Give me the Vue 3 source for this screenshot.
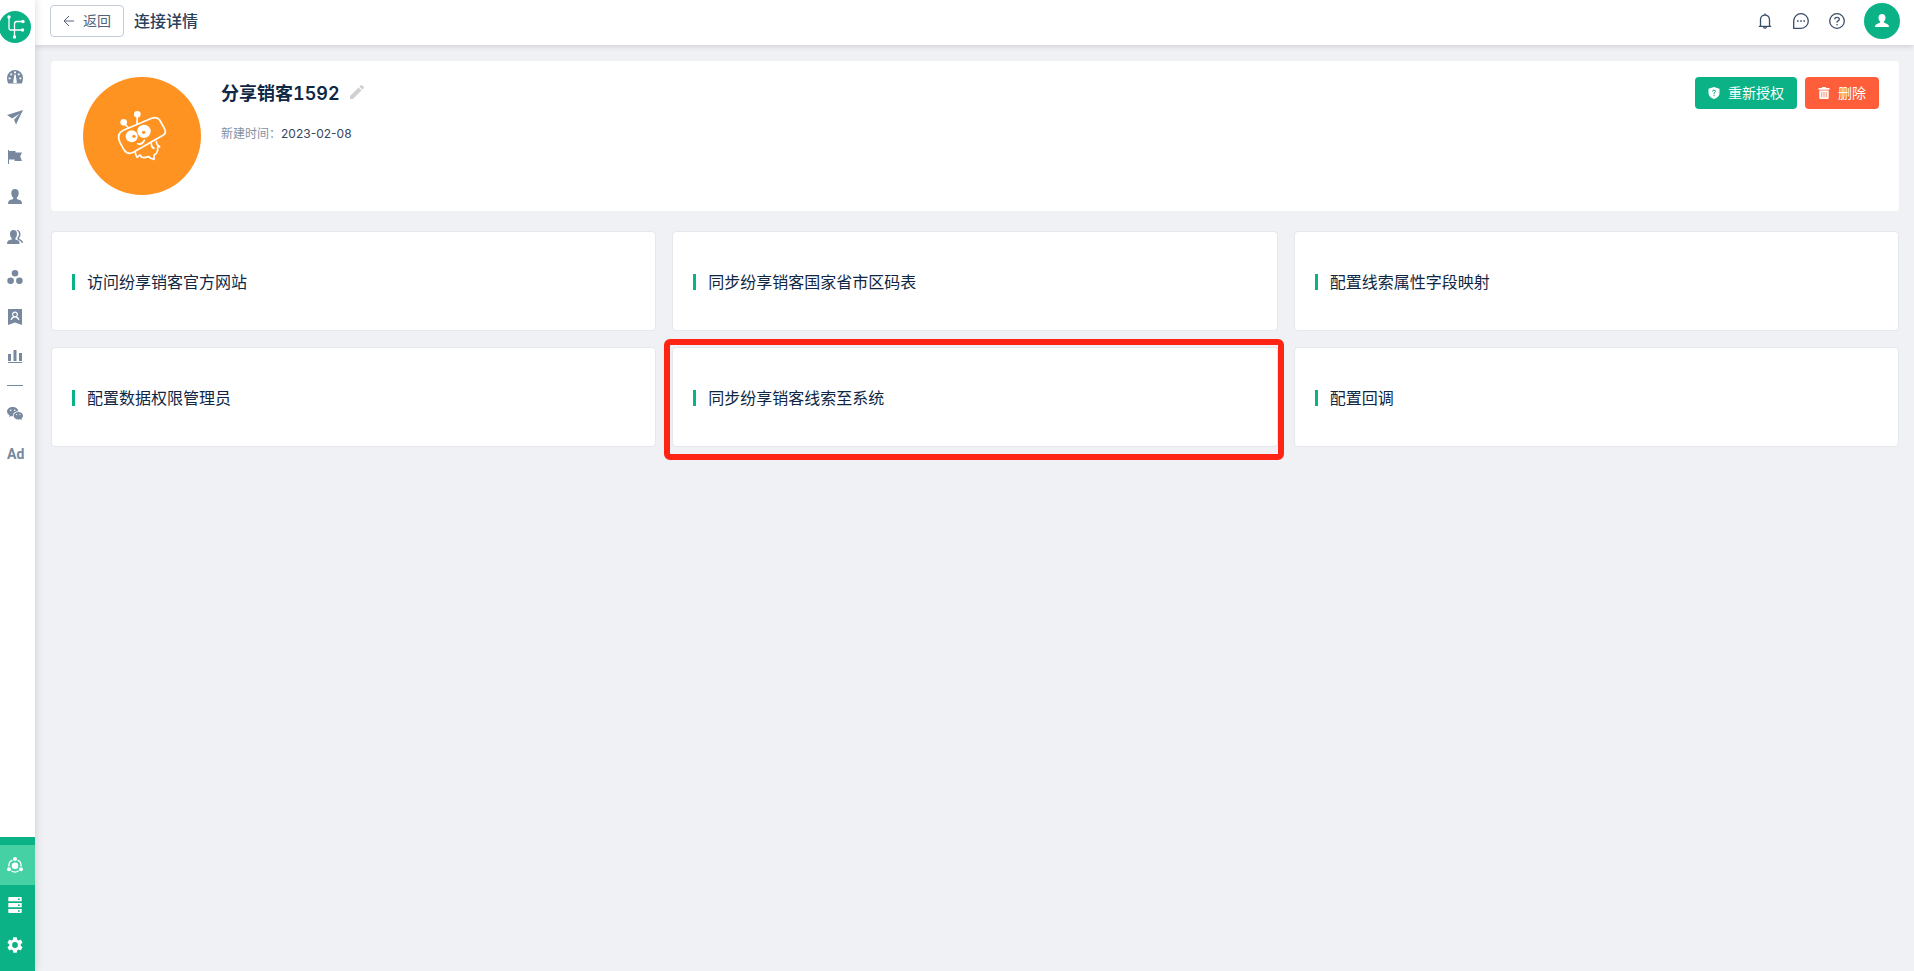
<template>
  <div class="layout">
    <aside class="sidebar">
      <a href="#" class="logo" aria-label="首页">
        <svg viewBox="0 0 32 32" width="32" height="32">
          <circle cx="16" cy="16" r="16" fill="#0ab286" />
          <g fill="none" stroke="#fff" stroke-width="1.3">
            <path d="M10 6v11q0 2 2 2h11M24 10.500h-6q-2.500 0-2.500 2.500v13" />
          </g>
          <g fill="#fff">
            <circle cx="10" cy="6" r="1.700" />
            <circle cx="24" cy="10.500" r="1.700" />
            <circle cx="23.500" cy="19" r="1.700" />
            <circle cx="15.500" cy="26" r="1.700" />
          </g>
        </svg>
      </a>
      <nav class="menu">
        <template v-for="item in menus" :key="item.name">
          <hr v-if="item.divided" class="divider" />
          <a href="#" class="menu-item" :aria-label="item.name">
            <span v-if="item.text" class="menu-text">{{ item.text }}</span>
            <svg v-else viewBox="0 0 16 16" width="16" height="16">
              <path :d="item.icon" fill="currentColor" fill-rule="evenodd" />
            </svg>
          </a>
        </template>
      </nav>
      <nav class="menu menu-bottom">
        <a href="#" class="menu-item active" aria-label="连接">
          <svg viewBox="0 0 16 16" width="16" height="16">
            <g fill="none" stroke="currentColor" stroke-width="1.300">
              <path d="M5.500 3.100A6 6 0 0 0 2 9.500M10.500 3.100A6 6 0 0 1 14 9.500M4.300 13.800a6.300 6.300 0 0 0 7.400 0" />
            </g>
            <g fill="currentColor">
              <circle cx="8" cy="8.700" r="3.300" />
              <circle cx="8" cy="2" r="2" />
              <circle cx="2" cy="12.200" r="2" />
              <circle cx="14" cy="12.200" r="2" />
            </g>
          </svg>
        </a>
        <a href="#" class="menu-item" aria-label="数据">
          <svg viewBox="0 0 16 16" width="16" height="16">
            <path
              d="M2 0h12q.700 0 .700.700v3.600H1.300V.700Q1.300 0 2 0zM1.300 6h13.400v4.300H1.300zM1.300 12h13.400v3.300q0 .700-.700.700H2q-.700 0-.700-.700zM11 1.500v1.500h1.700V1.500zM11 7.400v1.500h1.700V7.400zM11 13.300v1.500h1.700v-1.500z"
              fill="currentColor"
              fill-rule="evenodd"
            />
          </svg>
        </a>
        <a href="#" class="menu-item" aria-label="设置">
          <svg viewBox="2 2 20 20" width="16" height="16">
            <path
              d="M19.140 12.940c.040-.300.060-.610.060-.940s-.020-.640-.070-.940l2.030-1.580a.49.49 0 0 0 .120-.610l-1.920-3.320a.49.49 0 0 0-.590-.220l-2.390.960a7 7 0 0 0-1.620-.940l-.360-2.540a.48.48 0 0 0-.480-.410h-3.840a.48.48 0 0 0-.470.410l-.360 2.540a7.300 7.300 0 0 0-1.620.940l-2.390-.960a.48.48 0 0 0-.590.220L2.740 8.870a.48.48 0 0 0 .120.610l2.030 1.580a6 6 0 0 0 0 1.880l-2.030 1.580a.49.49 0 0 0-.120.610l1.920 3.320c.120.220.370.290.590.220l2.390-.960c.500.380 1.030.700 1.620.940l.360 2.540c.050.240.240.410.480.410h3.840c.240 0 .440-.170.470-.410l.360-2.540a7.300 7.300 0 0 0 1.620-.940l2.390.960c.220.080.470 0 .590-.220l1.920-3.320a.48.48 0 0 0-.120-.610zM12 15.600a3.600 3.600 0 1 1 0-7.200 3.600 3.600 0 0 1 0 7.200z"
              fill="currentColor"
            />
          </svg>
        </a>
      </nav>
    </aside>

    <div class="container">
      <header class="header">
        <button type="button" class="btn btn-back">
          <svg viewBox="0 0 12 12" width="12" height="12">
            <path d="M11 6H1.500M6 1 1 6l5 5" fill="none" stroke="currentColor" />
          </svg>
          <span class="btn-text">返回</span>
        </button>
        <h1 class="title">连接详情</h1>
        <div class="header-tools">
          <button type="button" class="tool" aria-label="通知">
            <svg viewBox="0 0 16 16" width="16" height="16">
              <path
                d="M1.800 13.300h12.400M3.500 13.300V6.500a4.500 4.500 0 0 1 9 0v6.800M8 2V.500M6.300 14.300q1.700 1.700 3.400 0"
                fill="none"
                stroke="currentColor"
                stroke-width="1.300"
              />
            </svg>
          </button>
          <button type="button" class="tool" aria-label="消息">
            <svg viewBox="0 0 16 16" width="16" height="16">
              <path
                d="M.700 15.300V8A7.300 7.300 0 1 1 8 15.300z"
                fill="none"
                stroke="currentColor"
                stroke-width="1.300"
              />
              <path d="M4 7.200h1.600v1.600H4zM7.200 7.200h1.600v1.600H7.200zM10.400 7.200H12v1.600h-1.600z" fill="currentColor" />
            </svg>
          </button>
          <button type="button" class="tool" aria-label="帮助">
            <svg viewBox="0 0 16 16" width="16" height="16">
              <g fill="none" stroke="currentColor" stroke-width="1.300">
                <circle cx="8" cy="8" r="7.300" />
                <path d="M5.700 6.300Q5.700 4.300 8 4.300t2.300 2q0 1-1.200 1.600T8 9.600" />
              </g>
              <circle cx="8" cy="11.800" r=".8" fill="currentColor" />
            </svg>
          </button>
        </div>
        <button type="button" class="user" aria-label="用户">
          <svg viewBox="0 0 14 14" width="14" height="14">
            <path :d="userIcon" fill="currentColor" />
          </svg>
        </button>
      </header>

      <main class="main">
        <section class="profile">
          <div class="avatar">
            <svg viewBox="-87 -87 354 354" width="118" height="118">
              <g fill="none" stroke="#fff" stroke-width="5" stroke-linejoin="round" stroke-linecap="round">
                <path d="M34 73 119 37Q135 31 143 42L158 69Q164 81 153 88L64 139Q47 147 37 133L23 108Q13 83 34 73z" />
                <path d="M38 54 50 66M76 30 75 54M77 113Q90 118 97 103" />
                <path
                  d="M70 140Q71 148 75 154L84 147Q89 156 96 155L111 152Q116 159 126 160L126 148Q139 140 137 124L143 122Q133 117 133 107M118 113Q118 124 126 127"
                />
              </g>
              <g fill="#fff">
                <circle cx="35" cy="49" r="10" />
                <circle cx="76" cy="25" r="10" />
                <circle cx="59" cy="91" r="18" />
                <circle cx="96" cy="76" r="20" />
              </g>
              <g fill="#ff9321">
                <circle cx="66" cy="91" r="5" />
                <circle cx="95" cy="79" r="5" />
              </g>
            </svg>
          </div>
          <div class="info">
            <h2 class="name">
              分享销客1592
              <button type="button" class="edit" aria-label="编辑">
                <svg viewBox="3 3 18 18" width="14" height="14">
                  <path
                    d="M3 17.250V21h3.750L17.810 9.940l-3.750-3.750zM20.710 7.040a1 1 0 0 0 0-1.410l-2.340-2.340a1 1 0 0 0-1.410 0l-1.830 1.830 3.750 3.750z"
                    fill="currentColor"
                  />
                </svg>
              </button>
            </h2>
            <p class="created"><span class="label">新建时间：</span>2023-02-08</p>
          </div>
          <div class="actions">
            <button type="button" class="btn btn-primary">
              <svg viewBox="0 0 12 12" width="12" height="12">
                <path d="M6 0 11.500 1.700V6Q11.500 10 6 12 .5 10 .5 6V1.700z" fill="currentColor" />
                <path d="M4.500 4.500Q4.500 3.200 6 3.200t1.500 1.200Q7.500 5.300 6 6v1.200M6 8v1.200" fill="none" stroke="#0ab286" />
              </svg>
              <span class="btn-text">重新授权</span>
            </button>
            <button type="button" class="btn btn-danger">
              <svg viewBox="0 0 12 12" width="12" height="12">
                <path d="M4 0h4v1h3.500v1.800H.5V1H4zM1.300 3.500h9.400V11q0 1-1 1H2.300q-1 0-1-1z" fill="currentColor" />
                <path d="M3.800 5v5.500M6 5v5.500M8.200 5v5.500" stroke="#ff5e3a" stroke-width=".7" />
              </svg>
              <span class="btn-text">删除</span>
            </button>
          </div>
        </section>

        <section class="card-list">
          <a
            v-for="card in cards"
            :key="card"
            href="#"
            :class="['card', card === activeCard ? 'marked' : '']"
          >
            <span class="card-title">{{ card }}</span>
          </a>
        </section>
      </main>
    </div>
  </div>
</template>

<script setup>
import { ref } from "vue";

const userIcon =
  "M7 0C9.200 0 10.500 1.500 10.500 3.800 10.500 5.500 9.800 6.800 8.900 7.600V8.600L12.500 10.200Q14 11 14 13H0Q0 11 1.500 10.200L5.100 8.600V7.600C4.200 6.800 3.500 5.500 3.500 3.800 3.500 1.500 4.800 0 7 0z";

const menus = [
  {
    name: "概览",
    icon: "M8 1a8 8 0 0 1 8 8q0 3-1.200 5.500H1.200Q0 12 0 9a8 8 0 0 1 8-8zM7.400 5.500 6.300 12v2h3.400v-2L8.600 5.500zM7 2.500v1.800h2V2.500zM3.300 4.500v1.800h1.900V4.500zM10.800 4.500v1.800h1.900V4.500zM1.700 8.500v1.800h1.900V8.500zM12.400 8.500v1.800h1.900V8.500z",
  },
  { name: "营销", icon: "M16 1 9 15.500 7 10.800 12.500 4.800 5.200 9.400 0 6z" },
  {
    name: "活动",
    icon: "M1 1h1v1h6.500v1.500H15l-1.800 4L15 12H7.500v-1.500H2V15H1z",
  },
  {
    name: "用户",
    icon: "M8 0c2.400 0 3.700 1.600 3.700 4 0 2-.8 3.700-1.800 4.600V10l3.600 1.200Q15 12 15 15H1q0-3 1.500-3.800L6.100 10V8.600C5.100 7.700 4.300 6 4.300 4 4.300 1.600 5.600 0 8 0z",
  },
  {
    name: "群组",
    icon: "M6.500 1C8.800 1 10 2.600 10 4.900c0 2-.8 3.400-1.600 4.100v1.400l3 1.200Q12.600 12.500 12.600 15H0q0-2.500 1.400-3.400l3.300-1.200V9C3.800 8.300 3 6.900 3 4.900 3 2.600 4.200 1 6.500 1zM9.500 1c2.700-.2 4 1.600 4 4 0 1.700-.6 3.200-1.400 4v.8l2.600 1.500q1.300.9 1.300 2.700h-1.400q0-1-1-1.700L10.500 10.500V8.600Q12 7.400 12 5T9.500 1z",
  },
  {
    name: "分组",
    icon: "M8 1a3.300 3.300 0 1 1 0 6.600A3.300 3.300 0 0 1 8 1zM3.600 8.400a3.300 3.300 0 1 1 0 6.600 3.300 3.300 0 0 1 0-6.600zM12.400 8.400a3.300 3.300 0 1 1 0 6.600 3.300 3.300 0 0 1 0-6.600z",
  },
  {
    name: "会员",
    icon: "M1 0h14v16l-7-2.500L1 16zM8 2.500A2.900 2.900 0 0 0 6 7.600Q4 8.600 3.500 11h1.300Q5.500 8.500 8 8.500T11.200 11h1.300Q12 8.600 10 7.600A2.900 2.900 0 0 0 8 2.500zM8 3.700a1.800 1.800 0 1 1 0 3.600 1.800 1.800 0 0 1 0-3.600z",
  },
  {
    name: "统计",
    icon: "M1 5h3v7H1zM6.500 1h3v11h-3zM12 4h3v8h-3zM1 13h14v1H1z",
  },
  {
    name: "微信",
    divided: true,
    icon: "M5.700 1C9 1 11.300 3 11.400 5.300 8 5.200 5.500 7.600 6 10.300q-1.200 0-2-.3l-2 1.100.6-1.800Q0 7.800 0 5.500C0 3 2.500 1 5.700 1zM3.700 3.400a.8.800 0 1 0 0 1.600.8.800 0 0 0 0-1.600zM7.700 3.400a.8.800 0 1 0 0 1.600.8.800 0 0 0 0-1.600zM11.300 6c2.700 0 4.700 1.700 4.700 3.800q0 1.700-1.500 2.800l.4 1.400-1.600-.8q-1 .3-2 .3c-2.700 0-4.700-1.700-4.700-3.700S8.600 6 11.300 6zM9.700 8a.6.600 0 1 0 0 1.200.6.600 0 0 0 0-1.200zM12.900 8a.6.600 0 1 0 0 1.200.6.600 0 0 0 0-1.200z",
  },
  { name: "广告", text: "Ad" },
];

const cards = [
  "访问纷享销客官方网站",
  "同步纷享销客国家省市区码表",
  "配置线索属性字段映射",
  "配置数据权限管理员",
  "同步纷享销客线索至系统",
  "配置回调",
];

const activeCard = ref("同步纷享销客线索至系统");
</script>

<style>
body {
  margin: 0;
  background: #f0f1f5;
}
</style>

<style scoped>
.layout {
  display: flex;
  min-height: 100vh;
  color: #0f2744;
  font-family: Inter, "Noto Sans CJK SC", sans-serif;
  font-size: 14px;
}
.layout * {
  box-sizing: border-box;
}
svg {
  display: block;
  flex: none;
}
button {
  padding: 0;
  border: 0;
  background: none;
  color: inherit;
  font: inherit;
  cursor: pointer;
}
a {
  color: inherit;
  text-decoration: none;
}

/* 侧边栏 */
.sidebar {
  z-index: 2;
  display: flex;
  flex: none;
  flex-direction: column;
  width: 35px;
  background: #fff;
  box-shadow: 0 0 8px rgba(30, 35, 50, 0.18);
}
.logo {
  height: 57px;
  padding-top: 11px;
  margin-left: -1px;
}
.menu {
  color: #78899f;
}
.menu-item {
  display: flex;
  align-items: center;
  height: 40px;
  padding-left: 7px;
}
.menu-text {
  font-family: Roboto, sans-serif;
  font-size: 14px;
  font-weight: 700;
}
.divider {
  width: 16px;
  margin: 8px 0 8px 7px;
  border: 0;
  border-top: 1px solid #78899f;
}
.menu-bottom {
  margin-top: auto;
  padding: 8px 0 6px;
  background: #0ab286;
  color: #fff;
}
.menu-item.active {
  background: #45d1a4;
}

/* 顶栏 */
.container {
  flex: 1;
  min-width: 0;
}
.header {
  position: relative;
  display: flex;
  align-items: center;
  height: 45px;
  padding: 0 14px 3px 15px;
  background: #fff;
  box-shadow: 0 1px 6px rgba(30, 35, 50, 0.18);
}
.btn {
  display: flex;
  align-items: center;
  gap: 8px;
  height: 32px;
  padding: 0 13px;
  border-radius: 4px;
  color: #fff;
}
.btn-text {
  padding-bottom: 2px;
}
.btn-back {
  padding: 0 12px;
  border: 1px solid #c3ccd6;
  color: #52647a;
}
.title {
  margin: 0 0 0 10px;
  padding-bottom: 2px;
  color: #2b405b;
  font-size: 16px;
  font-weight: 500;
}
.header-tools {
  display: flex;
  align-items: center;
  gap: 20px;
  margin: 0 19px 0 auto;
  color: #3b4f69;
}
.user {
  display: flex;
  align-items: center;
  justify-content: center;
  width: 36px;
  height: 36px;
  border-radius: 50%;
  background: #0ab286;
  color: #fff;
}

.main {
  padding: 16px 15px 16px 16px;
}
.profile {
  display: flex;
  align-items: flex-start;
  padding: 16px 20px 16px 32px;
  border-radius: 4px;
  background: #fff;
}
.avatar {
  overflow: hidden;
  border-radius: 50%;
  background: #ff9321;
}
.info {
  flex: 1;
  margin-left: 20px;
}
.name {
  display: flex;
  align-items: center;
  height: 30px;
  margin: 0;
  font-size: 18px;
  font-weight: 600;
  font-variant-numeric: tabular-nums;
}
.edit {
  margin-left: 10px;
  color: #d0d0d0;
}
.created {
  margin: 17px 0 0;
  color: #34475f;
  font-size: 12px;
  line-height: 20px;
}
.label {
  color: #8391a3;
}
.actions {
  display: flex;
  gap: 8px;
}
.btn-primary {
  background: #0ab286;
}
.btn-danger {
  background: #ff5e3a;
}

/* 配置项 */
.card-list {
  display: grid;
  grid-template-columns: repeat(3, 1fr);
  gap: 16px;
  margin-top: 20px;
}
.card {
  position: relative;
  display: flex;
  align-items: center;
  height: 100px;
  padding: 2px 20px 0;
  border: 1px solid #e4e7ec;
  border-radius: 4px;
  background: #fff;
}
.card-title {
  padding-left: 12px;
  border-left: 3px solid #0ab286;
  font-size: 16px;
  line-height: 16px;
}
.card.marked::after {
  position: absolute;
  inset: -9px -7px -14px -9px;
  border: 6px solid #ff2414;
  border-radius: 6px;
  content: "";
}
</style>
